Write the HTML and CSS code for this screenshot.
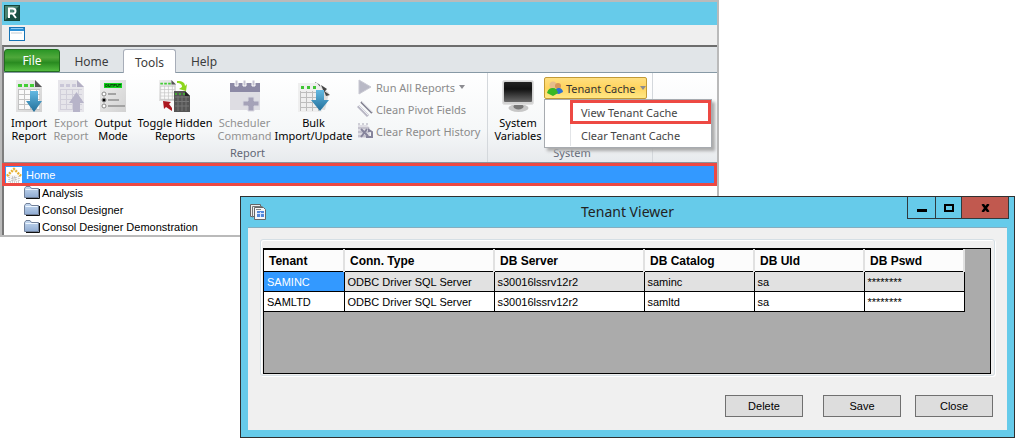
FILE: index.html
```html
<!DOCTYPE html>
<html lang="en">
<head>
<meta charset="utf-8">
<title>Tenant Viewer</title>
<link rel="stylesheet" href="styles.css">
</head>
<body>
<svg class="defs" width="0" height="0" aria-hidden="true">
  <defs>
    <linearGradient id="blue" x2="0" y2="1"><stop stop-color="#63b9e2"/><stop offset="1" stop-color="#226f9a"/></linearGradient>
    <linearGradient id="dark" x2="0" y2="1"><stop stop-color="#222"/><stop offset=".35" stop-color="#111"/><stop offset="1" stop-color="#6a6a6a"/></linearGradient>
    <linearGradient id="paper" x2="1" y2="1"><stop stop-color="#eeeeee"/><stop offset="1" stop-color="#d2d2d2"/></linearGradient>
    <linearGradient id="folder" x2="0" y2="1"><stop stop-color="#c7daf0"/><stop offset="1" stop-color="#8fabd2"/></linearGradient>
    <symbol id="sheet" viewBox="0 0 26 32">
      <path d="M0 0H19L26 7V32H0Z" fill="url(#paper)"/>
      <path d="M2 9H23V29H2Z" fill="#fafafa"/>
      <path d="M2 9.500H24M2 14.500H24M2 19.500H24M2 24.500H24M2 29.500H24M2.500 9V30M8.500 9V30M14.500 9V30M20.500 9V30" stroke="#c3c3c3" fill="none"/>
      <path d="M2 4H6V7H2ZM8 4H12V7H8ZM14 4H18V7H14Z" fill="#43cd35"/>
      <path d="M19 0L26 7H19Z" fill="#555"/>
    </symbol>
    <symbol id="foldericon" viewBox="0 0 16 13">
      <path d="M2 12.500H15.500V3" stroke="#111" fill="none"/>
      <path d="M.5 11.500V2.500L2 .5H6L7.500 2.500H14.500V11.500Z" fill="url(#folder)" stroke="#72819a"/>
      <path d="M1.500 3.500H13.500" stroke="#eef6ff"/>
    </symbol>
  </defs>
</svg>
<div class="desktop">
  <main class="app">
    <header class="app-title">
      <svg width="16" height="16" viewBox="0 0 16 16"><rect width="16" height="16" fill="#174f43"/><path d="M0 0H16L0 16Z" fill="#4c8574"/><rect x=".5" y=".5" width="15" height="15" fill="none" stroke="#16463b"/><path d="M5 13V3.500H8.500Q11.500 3.500 11.500 6T8.500 8.500H5M8.500 8.500L12 13" fill="none" stroke="#fff" stroke-width="2"/></svg>
    </header>
    <div class="quickbar">
      <svg width="16" height="14" viewBox="0 0 16 14"><rect x=".5" y=".5" width="15" height="13" fill="#fff" stroke="#1673b5"/><path d="M1 1H15V4H1Z" fill="#2c91d6"/><path d="M2 1.500H14" stroke="#90cff5"/><path d="M2 5H13V7H2Z" fill="#e1e5e8"/></svg>
    </div>
    <div class="client">
      <nav class="tabs">
        <button class="tab file">File</button>
        <button class="tab home">Home</button>
        <button class="tab active">Tools</button>
        <button class="tab help">Help</button>
      </nav>
      <section class="ribbon">
        <div class="group">
          <div class="tools">
            <button class="tool narrow"><svg width="26" height="32" viewBox="0 0 26 32"><use href="#sheet"/><path d="M14 11H22V21H26L18 32L10 21H14Z" fill="url(#blue)"/></svg><span>Import<br>Report</span></button>
            <button class="tool narrow" disabled><svg width="26" height="32" viewBox="0 0 26 32"><path d="M0 0H19L26 7V32H0Z" fill="#e6e5ea"/><path d="M2 9.500H24M2 14.500H24M2 19.500H24M2 24.500H24M2 29.500H24M2.500 9V30M8.500 9V30M14.500 9V30M20.500 9V30" stroke="#d1cfda"/><path d="M2 4H6V7H2ZM8 4H12V7H8ZM14 4H18V7H14Z" fill="#cac7d8"/><path d="M19 0L26 7H19Z" fill="#b3afc4"/><path d="M15 32H22V23H26L18.500 12L11 23H15Z" fill="#b7b4c9"/></svg><span>Export<br>Report</span></button>
            <button class="tool narrow"><svg width="26" height="32" viewBox="0 0 26 32"><path d="M0 0H26V32H0Z" fill="url(#paper)"/><rect x="4" y="3" width="18" height="5" fill="#12d51c"/><text x="13" y="7" text-anchor="middle" class="output-mark">OUTPUT</text><g fill="#fff" stroke="#888"><circle cx="4" cy="14" r="2"/><circle cx="4" cy="20" r="2"/><circle cx="4" cy="26" r="2"/></g><circle cx="4" cy="20" r="1.500"/><path d="M8 14H16M8 20H19M8 26H25" stroke="#a3a3a3" stroke-width="2"/></svg><span>Output<br>Mode</span></button>
            <button class="tool toggle"><svg width="32" height="32" viewBox="0 0 32 32"><use href="#sheet" width="17" height="21"/><path d="M15 11H26L31 16V32H15Z" fill="#555"/><path d="M16 17H30M16 21.500H30M16 26H30M19 16V31M23 16V31M27 16V31" stroke="#777"/><path d="M16 14H18M20 14H22M24 14H26" stroke="#43a536" stroke-width="2"/><path d="M26 11L31 16H26Z" fill="#222"/><path d="M18 1C24 1 26 3 26 6L28 4L27 11L20 9L23 7C23 4 21 3 18 3Z" fill="#8dd51b"/><path d="M4 21L12 22L10 24L13 28V31L7 27L5 29Z" fill="#ac1820"/></svg><span>Toggle Hidden<br>Reports</span></button>
            <button class="tool scheduler" disabled><svg width="30" height="32" viewBox="0 0 30 32"><path d="M0 12H30V30H0Z" fill="#dedde3"/><path d="M0 3H30V12H0Z" fill="#8c89a5"/><path d="M5 0H8V6H5ZM13 0H16V6H13ZM22 0H25V6H22Z" fill="#c4c2d0" stroke="#fff"/><path d="M18 17H24V21H29V26H24V31H18V26H13V21H18Z" fill="#a5a2b8" stroke="#d9d8e1"/></svg><span>Scheduler<br>Command</span></button>
            <button class="tool bulk"><svg width="32" height="32" viewBox="0 0 32 32"><path d="M20 3L31 13L27 30L10 28Z" fill="#ddd"/><path d="M17 2L22 5L21 10ZM23 5L29 9L26 12ZM26 11L32 15L28 16Z" fill="#444"/><path d="M0 3H19L24 9V32H0Z" fill="#efefef"/><path d="M2 12.500H23M2 17.500H23M2 22.500H23M2 27.500H23M2.500 11V31M8.500 11V31M14.500 11V31M20.500 11V31" stroke="#bdbdbd"/><path d="M3 6H6V9H3ZM9 6H12V9H9ZM15 6H18V9H15Z" fill="#41c535"/><path d="M18 10H26V20H31L22 31L13 20H18Z" fill="url(#blue)"/></svg><span>Bulk<br>Import/Update</span></button>
            <div class="commands">
              <button class="command" disabled><svg width="16" height="16" viewBox="0 0 16 16"><path d="M2 1L14 8L2 15Z" fill="#b9b9c6" stroke="#c9c9d2"/></svg>Run All Reports<i class="arrow"></i></button>
              <button class="command" disabled><svg width="16" height="16" viewBox="0 0 16 16"><path d="M1 5L11 15" stroke="#b9b8c5" stroke-width="3"/><path d="M1 4L11 14" stroke="#ededf2"/><path d="M4 1L15 12" stroke="#858493" stroke-width="2"/><path d="M5 1L15 11" stroke="#d5d5dc"/></svg>Clean Pivot Fields</button>
              <button class="command" disabled><svg width="16" height="16" viewBox="0 0 16 16"><path d="M1 2H10L13 5V15H1Z" fill="#dfdee5"/><path d="M1 1H3M5 1H7M9 1H11M1 5H12M1 9H12M1 13H12" stroke="#a8a6b5"/><path d="M4 6L11 13M10 6L4 14M12 9V7L15 9V14H9" stroke="#85839b" stroke-width="2" fill="none"/></svg>Clear Report History</button>
            </div>
          </div>
          <div class="group-name">Report</div>
        </div>
        <div class="group system">
          <div class="tools">
            <button class="tool variables"><svg width="32" height="32" viewBox="0 0 32 32"><path d="M13 23H20L21 28H12Z" fill="#777"/><ellipse cx="16.500" cy="28" rx="10" ry="4" fill="#c7c7c7"/><ellipse cx="16.500" cy="26.500" rx="5" ry="3" fill="#777"/><rect x=".5" y=".5" width="31" height="24" rx="2" fill="#d3d3d3" stroke="#e1e1e1"/><rect x="2" y="2" width="28" height="20" rx="1" fill="url(#dark)"/></svg><span>System<br>Variables</span></button>
            <div class="cache">
              <button class="cache-button"><svg width="16" height="16" viewBox="0 0 16 16"><circle cx="6" cy="5" r="3.500" fill="#e7bd8a"/><circle cx="11" cy="6" r="3" fill="#d79657"/><path d="M7 13C8 9 10 8 12 8S16 10 16 12L12 14Z" fill="#2c72d2"/><path d="M0 13C1 9 3 8 6 8S10 10 11 13L6 16Z" fill="#38b825"/></svg>Tenant Cache<i class="arrow"></i></button>
              <div class="menu"><button class="marked">View Tenant Cache</button><button>Clear Tenant Cache</button></div>
            </div>
          </div>
          <div class="group-name">System</div>
        </div>
      </section>
    </div>
    <div class="tree">
      <div class="root"><svg width="16" height="16" viewBox="0 0 16 16"><rect width="16" height="16" fill="#fff"/><path d="M3 8V15H13V8" fill="#f4f4f4" stroke="#aaa" stroke-dasharray="1 1"/><path d="M6 14V10H10V14" fill="#ddd" stroke="#aaa" stroke-dasharray="1 1"/><path d="M1 9L8 2L15 9" stroke="#e7b234" stroke-width="2.500" fill="none" stroke-dasharray="2 1"/></svg><span>Home</span></div>
      <div class="item"><svg width="16" height="13"><use href="#foldericon"/></svg>Analysis</div>
      <div class="item"><svg width="16" height="13"><use href="#foldericon"/></svg>Consol Designer</div>
      <div class="item"><svg width="16" height="13"><use href="#foldericon"/></svg>Consol Designer Demonstration</div>
    </div>
  </main>
  <section class="dialog" aria-labelledby="dialog-name">
    <header class="dialog-title">
      <svg class="dialog-icon" width="16" height="16" viewBox="0 0 16 16"><path d="M.5 12.500V.5H10.500V12.500Z" fill="#eee" stroke="#666"/><path d="M2.500 13.500V2.500H12.500" fill="none" stroke="#777"/><path d="M4.500 3.500H13.500L15.500 5.500V15.500H4.500Z" fill="#f7f7f7" stroke="#666"/><path d="M6 5.500H11" stroke="#888"/><rect x="7" y="7" width="7" height="6" fill="#5488db"/><path d="M7 9.500H14M10.500 8V13" stroke="#d5e5ff"/></svg>
      <h1 id="dialog-name">Tenant Viewer</h1>
      <div class="window-controls">
        <button aria-label="Minimize"><svg width="10" height="10"><path d="M0 6H10V9H0Z"/></svg></button>
        <button aria-label="Maximize"><svg width="10" height="8"><path d="M1 1H9V7H1Z" fill="none" stroke="#000" stroke-width="2"/></svg></button>
        <button class="close" aria-label="Close window"><svg width="9" height="8"><path d="M1.500 0L7.500 8M7.500 0L1.500 8" stroke="#000" stroke-width="2.500"/></svg></button>
      </div>
    </header>
    <div class="dialog-body">
      <div class="frame">
        <div class="grid">
          <table>
            <colgroup><col class="w80"><col class="w150"><col class="w150"><col class="w110"><col class="w110"><col class="w100"></colgroup>
            <thead><tr><th>Tenant</th><th>Conn. Type</th><th>DB Server</th><th>DB Catalog</th><th>DB UId</th><th>DB Pswd</th></tr></thead>
            <tbody>
              <tr class="current"><td class="selected">SAMINC</td><td>ODBC Driver SQL Server</td><td>s30016lssrv12r2</td><td>saminc</td><td>sa</td><td>********</td></tr>
              <tr><td>SAMLTD</td><td>ODBC Driver SQL Server</td><td>s30016lssrv12r2</td><td>samltd</td><td>sa</td><td>********</td></tr>
            </tbody>
          </table>
        </div>
      </div>
      <div class="actions"><button>Delete</button><button>Save</button><button>Close</button></div>
    </div>
  </section>
</div>
</body>
</html>
```
FILE: styles.css
```css
* { box-sizing: border-box; }
body { margin: 0; background: #fff; font: 11px/16px "Liberation Sans", Arial, sans-serif; color: #000; }
button { margin: 0; padding: 0; border: 0; background: none; font: inherit; color: inherit; }
svg { display: block; flex: none; }
.defs { position: absolute; }
.desktop { position: relative; min-height: 438px; }
.app { margin-right: 296px; border: 2px solid #bababa; background: #fff; }
.app-title { height: 23px; padding: 3px 2px; background: #66cbea; }
.quickbar { height: 20px; padding: 2px 7px; background: #efefef; }
.client { border-top: 2px solid #6d6d6d; border-left: 2px solid #7e7e7e; font: 11px/13px "Noto Sans", "Open Sans", sans-serif; }
.tabs { display: flex; align-items: flex-end; height: 26px; background: #e1e5e8; border-bottom: 1px solid #8799a5; color: #3c3c3c; font-size: 12px; }
.tab { height: 21px; text-align: center; }
.file { width: 56px; height: 23px; color: #fff; padding-bottom: 1px; border: 1px solid #236d20; border-radius: 3px 3px 0 0; background: linear-gradient(#2b9626, #4fa83b 35%, #298b20 60%, #53bb3f); }
.home { width: 63px; }
.active { width: 53px; height: 24px; margin-bottom: -1px; padding-top: 1px; border: 1px solid #a7adb8; border-bottom: 0; border-radius: 3px 3px 0 0; background: #fff; }
.help { width: 56px; }
.ribbon { display: flex; height: 90px; background: linear-gradient(#fff, #f5f7f8 65%, #e7eaed); border-bottom: 1px solid #8a949c; }
.group { display: flex; flex-direction: column; justify-content: space-between; padding: 3px 0 3px 4px; border-right: 1px solid #d4d8dc; }
.tools { display: flex; }
.group-name { text-align: center; color: #626775; }
.tool { display: flex; flex-direction: column; align-items: center; gap: 4px; padding-top: 4px; line-height: 13px; white-space: nowrap; }
.tool:disabled { color: #929292; }
.narrow { width: 42px; }
.toggle { width: 82px; }
.scheduler { width: 57px; }
.bulk { width: 81px; }
.output-mark { font: bold 4px "Liberation Sans", sans-serif; }
.commands { display: flex; flex-direction: column; width: 133px; padding-left: 3px; }
.command { display: flex; align-items: center; gap: 3px; height: 22px; color: #8b8b8b; white-space: nowrap; }
.arrow { width: 0; height: 0; margin-left: 1px; border: 3px solid transparent; border-top: 4px solid #8c8c91; border-bottom: 0; }
.system { width: 165px; }
.variables { width: 52px; }
.cache { position: relative; }
.cache-button { display: flex; align-items: center; gap: 3px; width: 103px; height: 22px; padding-left: 2px; white-space: nowrap; color: #333; border: 1px solid #c29a36; border-radius: 2px; background: linear-gradient(#ffdf80, #ffd45e 50%, #ffe885); margin-top: 1px; }
.menu { position: absolute; top: 23px; left: 0; z-index: 2; width: 168px; padding: 0 0 1px 25px; border: 1px solid #a7abb0; background: #fff; box-shadow: 3px 3px 3px #aaa; color: #454545; }
.menu button { display: block; width: 100%; height: 22px; padding-left: 10px; text-align: left; border-left: 1px solid #e2e4e7; white-space: nowrap; }
.menu .marked { height: 24px; padding-left: 8px; border: 3px solid #ed4943; }
.tree { border-left: 2px solid #777; }
.root { display: flex; align-items: center; gap: 4px; height: 23px; margin: 0 0 -2px -2px; padding-left: 1px; background: #3399ff; border: 3px solid #ed4943; color: #fff; }
.item { display: flex; align-items: center; gap: 2px; height: 17px; padding-left: 20px; }
.dialog { position: absolute; z-index: 3; top: 196px; left: 240px; right: 0; padding: 0 7px 7px; border: 1px solid #303030; background: #66cbea; }
.dialog-title { display: grid; grid-template-columns: 1fr auto 1fr; height: 30px; }
.dialog-icon { margin: 7px 2px; }
h1 { margin: 0; font: 14px/30px "Noto Sans", "Open Sans", sans-serif; color: #222; }
.window-controls { display: flex; justify-self: end; height: 22px; margin-right: -2px; border: 1px solid #303a3e; border-top: 0; }
.window-controls button { display: grid; place-items: center; width: 28px; border-right: 1px solid #303a3e; }
.window-controls button + button { width: 26px; }
.window-controls .close { width: 46px; border: 0; background: #c1594f; }
.dialog-body { padding: 11px 12px 13px; background: #f0f0f0; border-top: 1px solid #84aec0; }
.frame { padding: 8px 3px 1px; border: 1px solid #d5dfe5; border-radius: 3px; box-shadow: inset 1px 1px #fff, 1px 1px #fff; }
.grid { min-height: 126px; margin-left: -1px; border: 1px solid #000; background: #ababab; }
table { width: 701px; table-layout: fixed; border-collapse: collapse; border-top: 1px solid #000; line-height: 16px; background: #fff; }
.w80 { width: 80px; }
.w100 { width: 100px; }
.w110 { width: 110px; }
.w150 { width: 150px; }
th { height: 22px; padding: 0 5px; text-align: left; font-size: 12px; border-right: 2px solid #e1e1e1; border-bottom: 1px solid #000; background: #fcfcfc; }
td { height: 20px; padding: 0 3px; border: 1px solid #000; border-left: 0; white-space: nowrap; }
.current { background: #e1e1e1; }
.selected { background: #3399ff; color: #fff; }
.actions { display: flex; justify-content: flex-end; gap: 14px; padding: 19px 2px 0 0; }
.actions button { width: 78px; height: 22px; border: 1px solid #707070; background: #dddddd; }
.actions button:first-child { margin-right: 6px; }
```
